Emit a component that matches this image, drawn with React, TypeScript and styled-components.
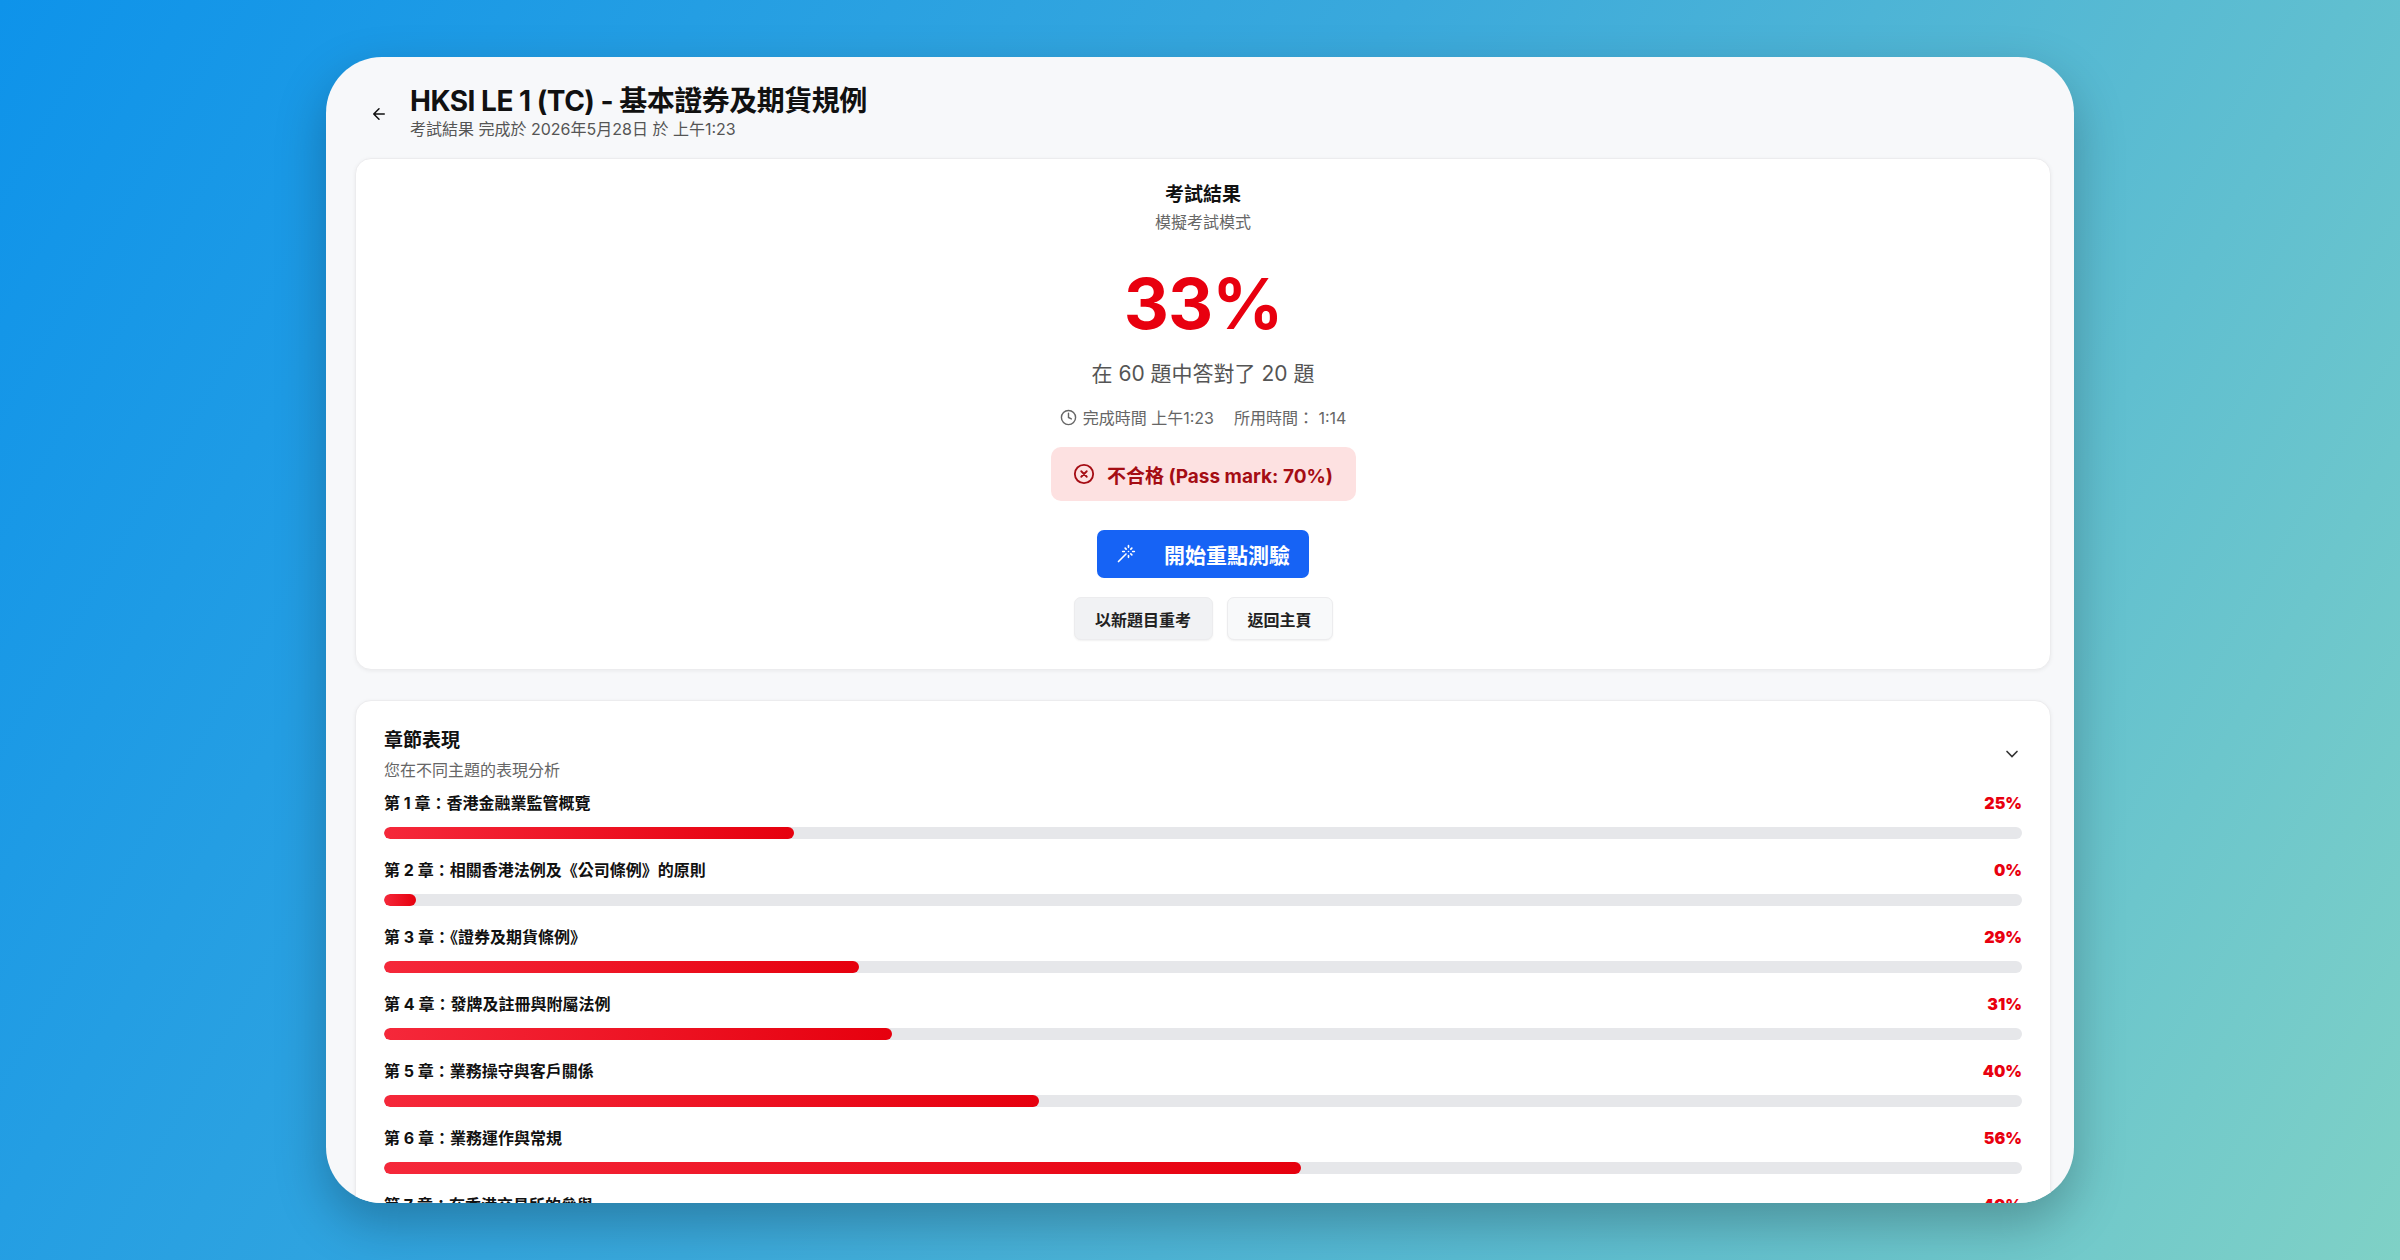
import React from "react";
import styled, { createGlobalStyle } from "styled-components";

const Global = createGlobalStyle`
  html, body { margin: 0; padding: 0; }
  body { font-family: Inter, "Noto Sans CJK TC", sans-serif; }
`;

const Page = styled.div`
  width: 2400px; height: 1260px; box-sizing: border-box;
  background: linear-gradient(120deg, #0e93ea 0%, #3aa9dc 45%, #7fd1c6 100%);
  padding: 57px 326px;
`;
const Window = styled.div`
  height: 1146px; background: #f7f8fa; border-radius: 56px; overflow: hidden;
  box-shadow: 0 20px 50px rgba(0,0,0,0.25);
  display: flex; flex-direction: column;
`;
const Header = styled.div`
  flex-shrink: 0;
  display: flex; align-items: center; gap: 22px; padding: 8px 0 0 44px; height: 101px; box-sizing: border-box;
`;
const Back = styled.div`display: flex; color: #111; margin-top: 4px;`;
const Title = styled.div`font-size: 28px; font-weight: 700; color: #111; letter-spacing: -0.5px; line-height: 34px;`;
const Sub = styled.div`font-size: 16px; color: #555; line-height: 22px;`;
const Body = styled.div`flex-shrink: 0; padding: 0 23px 0 29px; display: flex; flex-direction: column; gap: 30px;`;
const Card = styled.div`
  background: #fff; border-radius: 16px; border: 1px solid #ececee;
  box-shadow: 0 1px 4px rgba(0,0,0,0.06);
`;
const ResultCard = styled(Card)`
  height: 512px; box-sizing: border-box; padding-top: 22px;
  display: flex; flex-direction: column; align-items: center;
`;
const H = styled.div`font-size: 19px; font-weight: 700; color: #111; line-height: 28px;`;
const Mode = styled.div`font-size: 16px; color: #666; line-height: 22px; margin-top: 2px;`;
const Score = styled.div`font-size: 70px; font-weight: 700; color: #e8000f; line-height: 90px; margin-top: 26px; letter-spacing: -1px;`;
const Count = styled.div`font-size: 21px; color: #555; line-height: 30px; margin-top: 10px;`;
const Time = styled.div`display: flex; align-items: center; gap: 6px; font-size: 16px; color: #666; margin-top: 16px; span{margin-left:14px;}`;
const Fail = styled.div`
  margin-top: 18px; width: 305px; height: 54px; border-radius: 10px; background: #fde1e1;
  color: #a50d14; font-size: 19px; font-weight: 700; display: flex; align-items: center; justify-content: center; gap: 12px;
`;
const Primary = styled.button`
  margin-top: 29px; width: 212px; height: 48px; border: none; border-radius: 7px; background: #1663f5;
  color: #fff; font-size: 21px; font-weight: 700; font-family: inherit; display: flex; align-items: center; justify-content: center; gap: 28px;
`;
const Row = styled.div`display: flex; gap: 14px; margin-top: 19px;`;
const Secondary = styled.button<{ $w: number; $bg: string }>`
  width: ${p => p.$w}px; height: 43px; border: 1px solid #ececee; border-radius: 7px; background: ${p => p.$bg};
  font-family: inherit; font-size: 16px; font-weight: 700; color: #222; box-shadow: 0 1px 2px rgba(0,0,0,0.06);
`;
const ChapterCard = styled(Card)`padding: 26px 28px 40px 28px;`;
const CHead = styled.div`display: flex; justify-content: space-between; align-items: center;`;
const CTitle = styled.div`font-size: 19px; font-weight: 700; color: #111; line-height: 28px;`;
const CSub = styled.div`font-size: 16px; color: #666; line-height: 22px; margin-top: 4px;`;
const List = styled.div`display: flex; flex-direction: column; gap: 19px; margin-top: 10px;`;
const Item = styled.div`display: flex; flex-direction: column; gap: 12px;`;
const Label = styled.div`display: flex; justify-content: space-between; font-size: 16px; font-weight: 700; color: #111; line-height: 24px; b{color:#e8000f;}`;
const Track = styled.div`height: 12px; border-radius: 6px; background: #e6e7ea; overflow: hidden;`;
const Fill = styled.div`height: 100%; border-radius: 6px; background: linear-gradient(90deg, #f5283a, #e6000e); min-width: 32px;`;

const chapters: [string, number][] = [
  ["第 1 章：香港金融業監管概覽", 25],
  ["第 2 章：相關香港法例及《公司條例》的原則", 0],
  ["第 3 章：《證券及期貨條例》", 29],
  ["第 4 章：發牌及註冊與附屬法例", 31],
  ["第 5 章：業務操守與客戶關係", 40],
  ["第 6 章：業務運作與常規", 56],
  ["第 7 章：在香港交易所的參與", 40],
];

export default function App() {
  return (
    <>
      <Global />
      <Page>
        <Window>
          <Header>
            <Back>
              <svg width="18" height="18" viewBox="0 0 24 24" fill="none" stroke="currentColor" strokeWidth="2" strokeLinecap="round" strokeLinejoin="round"><path d="M19 12H5M12 19l-7-7 7-7" /></svg>
            </Back>
            <div>
              <Title>HKSI LE 1 (TC) - 基本證券及期貨規例</Title>
              <Sub>考試結果 完成於 2026年5月28日 於 上午1:23</Sub>
            </div>
          </Header>
          <Body>
            <ResultCard>
              <H>考試結果</H>
              <Mode>模擬考試模式</Mode>
              <Score>33%</Score>
              <Count>在 60 題中答對了 20 題</Count>
              <Time>
                <svg width="17" height="17" viewBox="0 0 24 24" fill="none" stroke="currentColor" strokeWidth="2" strokeLinecap="round"><circle cx="12" cy="12" r="10" /><path d="M12 6v6l4 2" /></svg>
                完成時間 上午1:23<span>所用時間： 1:14</span>
              </Time>
              <Fail>
                <svg width="22" height="22" viewBox="0 0 24 24" fill="none" stroke="currentColor" strokeWidth="2" strokeLinecap="round"><circle cx="12" cy="12" r="10" /><path d="M15 9l-6 6M9 9l6 6" /></svg>
                不合格 (Pass mark: 70%)
              </Fail>
              <Primary>
                <svg width="20" height="20" viewBox="0 0 24 24" fill="none" stroke="currentColor" strokeWidth="2" strokeLinecap="round"><path d="M15 4V2M15 16v-2M8 9h2M20 9h2M17.8 11.8 19 13M15 9h.01M17.8 6.2 19 5M3 21l9-9M12.2 6.2 11 5" /></svg>
                開始重點測驗
              </Primary>
              <Row>
                <Secondary $w={139} $bg="#f1f2f4">以新題目重考</Secondary>
                <Secondary $w={106} $bg="#f8f9fa">返回主頁</Secondary>
              </Row>
            </ResultCard>
            <ChapterCard>
              <CHead>
                <div>
                  <CTitle>章節表現</CTitle>
                  <CSub>您在不同主題的表現分析</CSub>
                </div>
                <svg width="20" height="20" viewBox="0 0 24 24" fill="none" stroke="#333" strokeWidth="2" strokeLinecap="round"><path d="M6 9l6 6 6-6" /></svg>
              </CHead>
              <List>
                {chapters.map(([l, p]) => (
                  <Item key={l}>
                    <Label>{l}<b>{p}%</b></Label>
                    <Track><Fill style={{ width: `${p}%` }} /></Track>
                  </Item>
                ))}
              </List>
            </ChapterCard>
          </Body>
        </Window>
      </Page>
    </>
  );
}
